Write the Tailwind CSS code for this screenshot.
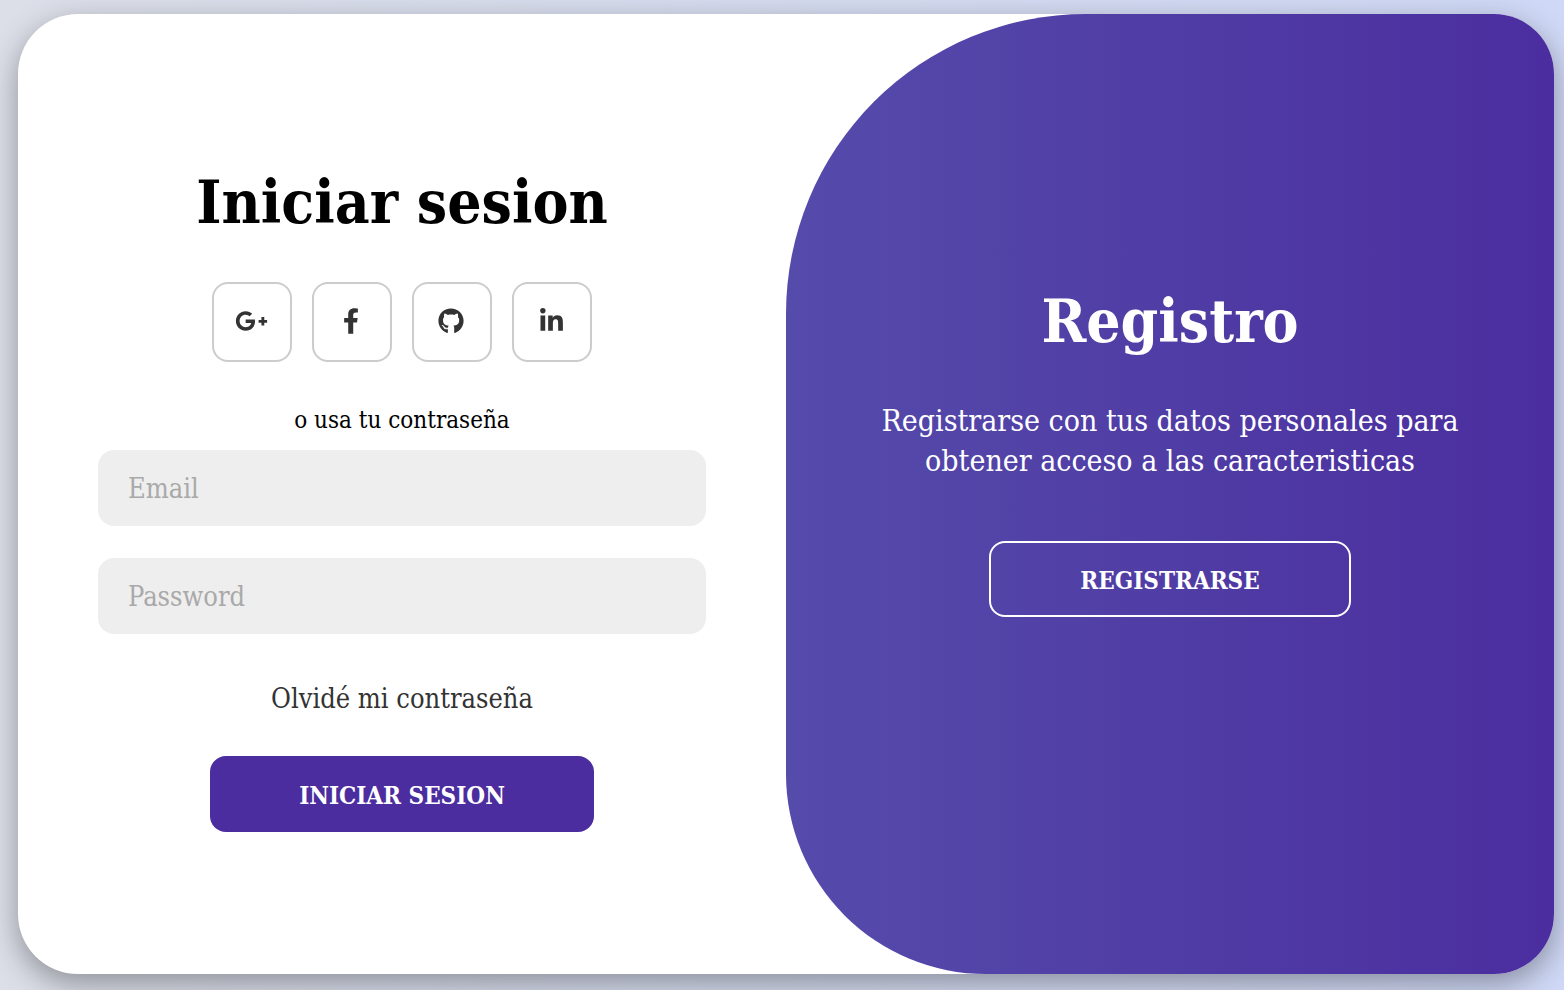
<!DOCTYPE html>
<html lang="es">
<head>
<meta charset="utf-8">
<meta name="viewport" content="width=device-width, initial-scale=1">
<title>Iniciar sesion</title>
<script src="https://cdn.jsdelivr.net/npm/@tailwindcss/browser@4"></script>
</head>
<body class="flex min-h-screen flex-col bg-linear-to-r from-[#dcdfe8] to-[#cfd8f6] pt-[14px] pr-[10px] pb-4 pl-[18px] font-['Roboto_Slab','DejaVu_Serif_Condensed','DejaVu_Serif',serif]">
<main class="grid flex-1 grid-cols-2 overflow-hidden rounded-[60px] bg-white shadow-[0_10px_30px_rgba(0,0,0,0.35)]">
  <form class="flex flex-col items-center justify-center px-20">
    <h1 class="pt-1.5 text-[60px] leading-[80px] font-bold whitespace-nowrap text-black">Iniciar sesion</h1>
    <div class="mt-10 flex gap-5">
      <a href="#" aria-label="Google Plus" class="flex size-20 items-center justify-center rounded-[20%] border-2 border-[#ccc] pr-0.5 pb-0.5 text-[#333]">
        <svg class="h-[26px] w-[33px]" viewBox="0 0 640 512" fill="currentColor" aria-hidden="true"><path d="M386.061 228.496c1.834 9.692 3.143 19.384 3.143 31.956C389.204 370.205 315.599 448 204.8 448c-106.084 0-192-85.915-192-192s85.916-192 192-192c51.864 0 95.083 18.859 128.611 50.292l-52.126 50.03c-14.145-13.621-39.028-29.599-76.485-29.599-65.484 0-118.92 54.221-118.92 121.277 0 67.056 53.436 121.277 118.92 121.277 75.961 0 104.513-54.745 108.965-82.773H204.8v-66.009h181.261zm185.406 6.437V179.2h-56.001v55.733h-55.733v56.001h55.733v55.733h56.001v-55.733H627.2v-56.001h-55.733z"/></svg>
      </a>
      <a href="#" aria-label="Facebook" class="flex size-20 items-center justify-center rounded-[20%] border-2 border-[#ccc] pr-0.5 pb-0.5 text-[#333]">
        <svg class="h-[26px] w-4" viewBox="0 0 320 512" fill="currentColor" aria-hidden="true"><path d="M279.14 288l14.22-92.66h-88.91v-60.13c0-25.35 12.42-50.06 52.24-50.06h40.42V6.26S260.43 0 225.36 0c-73.22 0-121.08 44.38-121.08 124.72v70.62H22.89V288h81.39v224h100.17V288z"/></svg>
      </a>
      <a href="#" aria-label="GitHub" class="flex size-20 items-center justify-center rounded-[20%] border-2 border-[#ccc] pr-0.5 pb-0.5 text-[#333]">
        <svg class="h-[26px] w-[26px]" viewBox="0 0 496 512" fill="currentColor" aria-hidden="true"><path d="M165.9 397.4c0 2-2.3 3.6-5.2 3.6-3.3.3-5.6-1.3-5.6-3.6 0-2 2.3-3.6 5.2-3.6 3-.3 5.6 1.3 5.6 3.6zm-31.1-4.5c-.7 2 1.3 4.3 4.3 4.9 2.6 1 5.6 0 6.2-2s-1.3-4.3-4.3-5.2c-2.6-.7-5.5.3-6.2 2.3zm44.2-1.7c-2.9.7-4.9 2.6-4.6 4.9.3 2 2.9 3.3 5.9 2.6 2.9-.7 4.9-2.6 4.6-4.6-.3-1.9-3-3.2-5.9-2.9zM244.8 8C106.1 8 0 113.3 0 252c0 110.9 69.8 205.8 169.5 239.2 12.8 2.3 17.3-5.6 17.3-12.1 0-6.2-.3-40.4-.3-61.4 0 0-70 15-84.7-29.8 0 0-11.4-29.1-27.8-36.6 0 0-22.9-15.7 1.6-15.4 0 0 24.9 2 38.6 25.8 21.9 38.6 58.6 27.5 72.9 20.9 2.3-16 8.8-27.1 16-33.7-55.9-6.2-112.3-14.3-112.3-110.5 0-27.5 7.6-41.3 23.6-58.9-2.6-6.5-11.1-33.3 2.6-67.9 20.9-6.5 69 27 69 27 20-5.6 41.5-8.5 62.8-8.5s42.8 2.9 62.8 8.5c0 0 48.1-33.6 69-27 13.7 34.7 5.2 61.4 2.6 67.9 16 17.7 25.8 31.5 25.8 58.9 0 96.5-58.9 104.2-114.8 110.5 9.2 7.9 17 22.9 17 46.4 0 33.7-.3 75.4-.3 83.6 0 6.5 4.6 14.4 17.3 12.1C428.2 457.8 496 362.9 496 252 496 113.3 383.5 8 244.8 8z"/></svg>
      </a>
      <a href="#" aria-label="LinkedIn" class="flex size-20 items-center justify-center rounded-[20%] border-2 border-[#ccc] pr-0.5 pb-0.5 text-[#333]">
        <svg class="h-[26px] w-[23px]" viewBox="0 0 448 512" fill="currentColor" aria-hidden="true"><path d="M100.28 448H7.4V148.9h92.88zM53.79 108.1C24.09 108.1 0 83.5 0 53.8a53.79 53.79 0 0 1 107.58 0c0 29.7-24.1 54.3-53.79 54.3zM447.9 448h-92.68V302.4c0-34.7-.7-79.2-48.29-79.2-48.29 0-55.69 37.7-55.69 76.7V448h-92.78V148.9h89.08v40.8h1.3c12.4-23.5 42.69-48.3 87.88-48.3 94 0 111.28 61.9 111.28 142.3V448z"/></svg>
      </a>
    </div>
    <span class="mt-10 pt-1 text-2xl leading-7 text-black">o usa tu contraseña</span>
    <input type="email" aria-label="Email" placeholder="Email" class="mt-4 h-[76px] w-full rounded-2xl bg-[#eee] px-[30px] text-[27px] text-[#333] outline-none placeholder:text-[#a9a9a9]">
    <input type="password" aria-label="Password" placeholder="Password" class="mt-8 h-[76px] w-full rounded-2xl bg-[#eee] px-[30px] text-[27px] text-[#333] outline-none placeholder:text-[#a9a9a9]">
    <a href="#" class="mt-12 text-[27px] leading-[34px] text-[#333]">Olvidé mi contraseña</a>
    <button type="button" class="mt-10 h-[76px] w-96 rounded-2xl bg-[#4b2d9f] pt-1 text-2xl font-semibold text-white uppercase">Iniciar sesion</button>
  </form>
  <section class="flex flex-col items-center justify-center rounded-tl-[300px] rounded-bl-[200px] bg-linear-to-r from-[#554bab] to-[#4b2d9f] px-[60px] pb-24 text-center text-white">
    <h2 class="pt-1.5 text-[60px] leading-[80px] font-bold">Registro</h2>
    <p class="mt-10 text-[30px] leading-10">Registrarse con tus datos personales para obtener acceso a las caracteristicas</p>
    <button type="button" class="mt-[60px] h-[76px] w-[362px] rounded-2xl border-2 border-white pt-1 text-2xl font-semibold uppercase">Registrarse</button>
  </section>
</main>
</body>
</html>
